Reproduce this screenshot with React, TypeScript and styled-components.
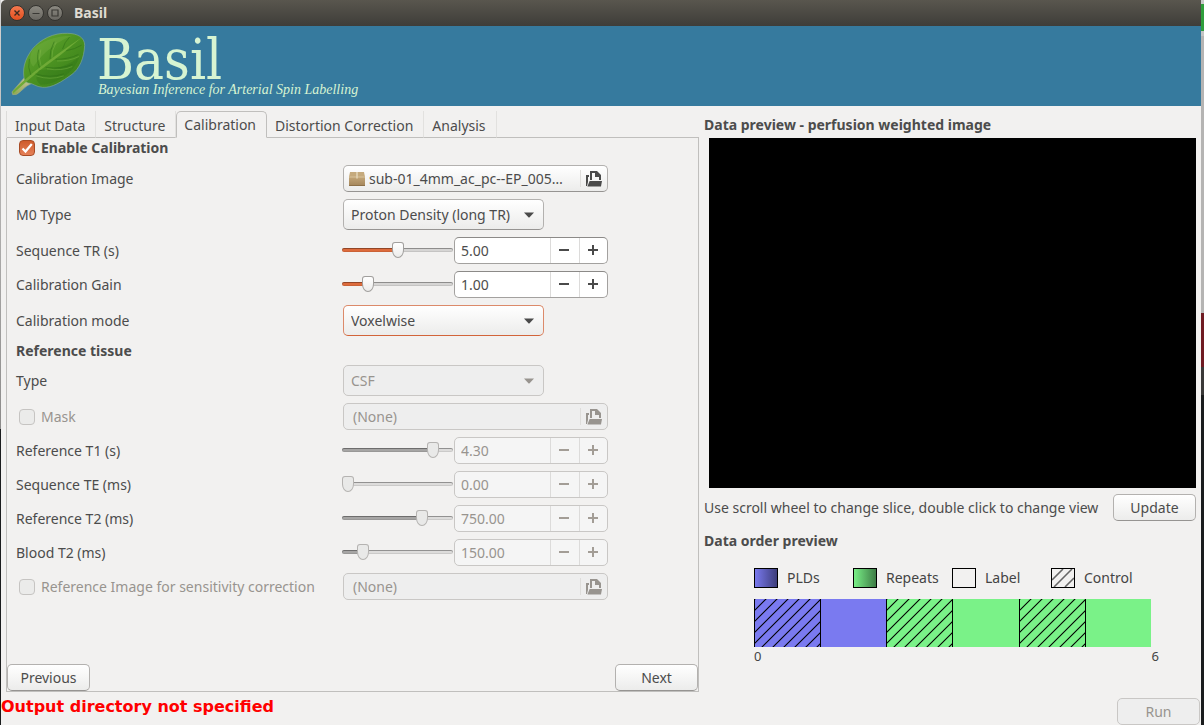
import React, { useState } from "react";
import styled, { createGlobalStyle, css } from "styled-components";

const c = {
  bg: "#f2f1f0",
  text: "#4c4c4c",
  muted: "#98948f",
  line: "#c0bfbd",
  accent: "#dd6b3c",
};

const GlobalStyle = createGlobalStyle`
  * { box-sizing: border-box; }
  body {
    margin: 0;
    font-family: "Noto Sans", "Open Sans", sans-serif;
    font-size: 14px;
    line-height: 20px;
    color: ${c.text};
    background: #1d1f1f;
  }
  button, input, select { font: inherit; color: inherit; margin: 0; }
`;

const Desktop = styled.div`
  min-height: 100vh;
  display: flex;
  padding: 0 3px 0 1px;
  background:
    linear-gradient(#c9c9c9 0 4px, #2f9e3c 4px 31px, #c4c4c4 31px 36px, #b5b4b3 36px 313px, #6f1a22 313px 367px, #3a3938 367px 395px, #1a1c1d 395px) right / 3px 100% no-repeat,
    linear-gradient(#d5d4d3, #8c8b8a 429px, #1a1c1d 429px) left / 1px 100% no-repeat;
`;

const Window = styled.div`
  flex: 1;
  min-width: 0;
  display: flex;
  flex-direction: column;
  background: ${c.bg};
`;

const TitleBar = styled.header`
  height: 26px;
  display: flex;
  align-items: center;
  gap: 3px;
  padding: 0 8px;
  border-top-left-radius: 5px;
  background: linear-gradient(#59564e, #3e3d39);
`;

const WindowButton = styled.button<{ $close?: boolean }>`
  width: 16px;
  height: 16px;
  padding: 0;
  display: grid;
  place-items: center;
  border: 1px solid #34332f;
  border-radius: 50%;
  background: ${(p) => (p.$close ? "linear-gradient(#f6794f, #e2501f)" : "linear-gradient(#8b8981, #696761)")};
`;

const WindowTitle = styled.h1`
  margin: 0 0 0 8px;
  font-size: 14px;
  line-height: 20px;
  color: #dfdbd2;
`;

const Banner = styled.div`
  height: 80px;
  display: flex;
  background: #367a9e;
  color: #d7f4d2;
`;

const BannerText = styled.div`
  margin-left: -4px;
  padding-top: 12px;
`;

const BannerName = styled.div`
  font-family: "DejaVu Serif Condensed", "Liberation Serif", serif;
  font-size: 56px;
  line-height: 44px;
`;

const BannerTag = styled.div`
  padding-left: 1px;
  font-family: "Liberation Serif", serif;
  font-size: 14px;
  line-height: 16px;
  font-style: italic;
`;

const Body = styled.main`
  flex: 1;
  display: grid;
  grid-template-columns: minmax(0, 1fr) 492px;
  gap: 5px;
  padding: 5px 5px 0;
`;

const Notebook = styled.section`
  display: flex;
  flex-direction: column;
`;

const TabList = styled.div`
  display: flex;
  height: 27px;
  align-items: flex-end;
  border-left: 1px solid #dddcda;
`;

const Tab = styled.button<{ $active: boolean }>`
  height: 27px;
  padding: 3px 10px 0 8px;
  border: 0;
  border-right: 1px solid #e2e1df;
  border-bottom: 1px solid ${c.line};
  background: transparent;
  white-space: nowrap;
  ${(p) =>
    p.$active &&
    css`
      padding: 1px 10px 1px 7px;
      border: 1px solid ${c.line};
      border-bottom-color: ${c.bg};
      border-radius: 5px 5px 0 0;
    `}
`;

const TabFiller = styled.div`
  flex: 1;
  height: 27px;
  border-bottom: 1px solid ${c.line};
`;

const Page = styled.form`
  flex: 1;
  display: flex;
  flex-direction: column;
  justify-content: space-between;
  border: 1px solid ${c.line};
  border-top: 0;
`;

const Fields = styled.div`
  display: flex;
  flex-direction: column;
  gap: 7px;
  padding-left: 9px;
`;

const Row = styled.div`
  display: grid;
  grid-template-columns: 326px 266px;
  align-items: center;
`;

const Heading = styled.h2<{ $tall?: boolean }>`
  margin: 0;
  font-size: 14px;
  line-height: ${(p) => (p.$tall ? 28 : 15)}px;
`;

const CheckLabel = styled.label<{ $off?: boolean; $bold?: boolean }>`
  display: flex;
  align-items: center;
  gap: 6px;
  padding-left: 3px;
  white-space: nowrap;
  color: ${(p) => (p.$off ? c.muted : c.text)};
  font-weight: ${(p) => (p.$bold ? 700 : 400)};
`;

const CheckBox = styled.input`
  appearance: none;
  width: 16px;
  height: 16px;
  border: 1px solid #c6c4c2;
  border-radius: 4px;
  background: #ebebea;
  &:checked {
    border-color: #a84b25;
    background: linear-gradient(#cf5b2c, #e58159);
  }
`;

const CheckCell = styled.span`
  display: grid;
  > * { grid-area: 1 / 1; }
  > svg { pointer-events: none; }
`;

const boxed = css<{ disabled?: boolean }>`
  border: 1px solid #b3b1af;
  border-bottom-color: #969492;
  border-radius: 5px;
  background: linear-gradient(#ffffff, #ececeb);
  &:disabled {
    border-color: #c9c7c5;
    background: #eeeeee;
    color: ${c.muted};
    opacity: 1;
  }
`;

const FileButton = styled.button`
  ${boxed}
  width: 265px;
  height: 27px;
  margin-left: 1px;
  padding: 0 5px;
  display: flex;
  align-items: center;
  text-align: left;
`;

const FileName = styled.span`
  flex: 1;
  padding-left: 4px;
  white-space: nowrap;
`;

const FileDivider = styled.span`
  width: 1px;
  height: 17px;
  margin: 0 5px 0 4px;
  background: #dedddb;
`;

const SelectWrap = styled.div`
  width: 201px;
  margin-left: 1px;
  display: grid;
  align-items: center;
  > * { grid-area: 1 / 1; }
  > svg { justify-self: end; margin-right: 10px; pointer-events: none; }
`;

const Select = styled.select<{ $focus?: boolean }>`
  ${boxed}
  appearance: none;
  width: 100%;
  height: 31px;
  padding: 0 22px 0 7px;
  ${(p) => p.$focus && css`border-color: #dc8a6a; border-bottom-color: #d2643a;`}
`;

const NumberCell = styled.div`
  display: grid;
  grid-template-columns: 111px 154px;
  gap: 1px;
  align-items: start;
`;

const Slider = styled.input<{ $fill: number }>`
  appearance: none;
  width: 100%;
  height: 25px;
  background: transparent;
  &::-webkit-slider-runnable-track {
    height: 4px;
    border-radius: 2px;
    box-shadow: inset 0 1px 0 rgba(0, 0, 0, 0.28), inset 0 0 0 1px rgba(0, 0, 0, 0.08);
    background: linear-gradient(to right, ${c.accent} ${(p) => p.$fill}%, #d6d5d4 ${(p) => p.$fill}%);
  }
  &:disabled::-webkit-slider-runnable-track {
    background: linear-gradient(to right, #a6a5a4 ${(p) => p.$fill}%, #dddcdb ${(p) => p.$fill}%);
  }
  &::-webkit-slider-thumb {
    appearance: none;
    width: 12px;
    height: 16px;
    margin-top: -6px;
    border: 1px solid #a19f9d;
    border-radius: 3px 3px 6px 6px / 3px 3px 8px 8px;
    background: linear-gradient(#ffffff, #ececeb);
  }
  &:disabled::-webkit-slider-thumb {
    border-color: #b5b3b1;
    background: #e9e9e8;
  }
`;

const Spin = styled.div<{ $off?: boolean }>`
  height: 27px;
  display: grid;
  grid-template-columns: 1fr 29px 28px;
  overflow: hidden;
  border: 1px solid ${(p) => (p.$off ? "#c9c7c5" : "#a3a19f")};
  border-top-color: ${(p) => (p.$off ? "#c9c7c5" : "#8c8a88")};
  border-radius: 5px;
  background: ${(p) => (p.$off ? "#f5f5f5" : "#ffffff")};
  color: ${(p) => (p.$off ? c.muted : c.text)};
`;

const SpinInput = styled.input`
  min-width: 0;
  padding: 1px 6px 0;
  border: 0;
  background: transparent;
  outline: 0;
`;

const SpinButton = styled.button`
  display: grid;
  place-items: center;
  padding: 0 2px 1px 0;
  border: 0;
  border-left: 1px solid #dcdbda;
  background: transparent;
`;

const PageButtons = styled.div`
  display: flex;
  justify-content: space-between;
`;

const PushButton = styled.button`
  ${boxed}
  width: 83px;
  height: 27px;
  padding: 0;
`;

const Side = styled.aside`
  display: flex;
  flex-direction: column;
`;

const Viewer = styled.div`
  height: 350px;
  margin: -1px 0 6px 5px;
  background: #000000;
`;

const ViewerBar = styled.div`
  display: flex;
  align-items: center;
  justify-content: space-between;
  white-space: nowrap;
  margin-bottom: 6px;
`;

const Order = styled.div`
  padding: 13px 45px 0 50px;
  color: #444444;
`;

const Legend = styled.ul`
  display: grid;
  grid-template-columns: repeat(4, 99px);
  margin: 0 0 11px;
  padding: 0;
  list-style: none;
`;

const LegendItem = styled.li`
  display: flex;
  align-items: center;
  gap: 9px;
`;

const Cells = styled.div`
  display: grid;
  grid-template-columns: repeat(6, 1fr);
  height: 48px;
`;

const Cell = styled.div<{ $color: string }>`
  border-left: 1px solid #000000;
  background: ${(p) => p.$color};
  overflow: hidden;
`;

const Axis = styled.div`
  display: flex;
  justify-content: space-between;
  margin-right: -8px;
  font-size: 13px;
  line-height: 18px;
`;

const Status = styled.footer`
  height: 33px;
  display: flex;
  justify-content: space-between;
  align-items: flex-end;
  padding-right: 1px;
`;

const ErrorText = styled.p`
  margin: 0;
  align-self: flex-start;
  font: bold 16px/30px "DejaVu Sans", sans-serif;
  color: #ff0000;
`;

const Leaf = () => (
  <svg width="100" height="80" viewBox="3 18 300 240" aria-hidden="true">
    <defs>
      <linearGradient id="leaf" x1="0" y1="0" x2="1" y2="1">
        <stop offset="0" stopColor="#6aa936" />
        <stop offset=".45" stopColor="#4d9422" />
        <stop offset="1" stopColor="#357a18" />
      </linearGradient>
      <linearGradient id="stem" x1="0" y1="1" x2="1" y2="0">
        <stop offset="0" stopColor="#8ba64c" />
        <stop offset="1" stopColor="#cfc9a3" />
      </linearGradient>
    </defs>
    <path d="M36 216 L72 174 L104 186 Q78 196 64 212 Q50 227 38 224Z" fill="url(#stem)" stroke="#9aa98a" strokeWidth="2" />
    <path d="M74 183 C66 150 72 120 98 86 C122 58 160 38 202 40 C232 40 254 52 254 76 C252 116 238 146 216 163 C184 186 156 204 128 202 C108 201 96 188 84 189 Z" fill="url(#leaf)" stroke="#7fa790" strokeWidth="2" />
    <path d="M38 214 Q72 180 102 156 Q168 104 246 52 Q182 108 116 154 Q80 184 40 220Z" fill="#6faa36" />
    <path d="M98 90 C126 62 164 48 216 47 C180 60 132 92 100 140 C88 128 88 108 98 90Z" fill="#7db648" opacity=".3" />
    <path d="M118 150 C170 148 212 134 238 110 C224 158 168 194 122 194 C108 184 104 168 118 150Z" fill="#1f6411" opacity=".22" />
    <g fill="none" stroke="#2c6d16" strokeWidth="3" opacity=".5" strokeLinecap="round">
      <path d="M92 164 Q82 142 88 118" />
      <path d="M118 142 Q108 118 116 90" />
      <path d="M150 116 Q148 92 162 66" />
      <path d="M188 86 Q192 68 208 52" />
      <path d="M108 162 Q150 176 190 162" />
      <path d="M138 142 Q184 148 216 134" />
      <path d="M168 118 Q206 118 234 104" />
      <path d="M200 92 Q224 88 244 76" />
    </g>
    <g fill="none" stroke="#93c557" strokeWidth="2" opacity=".5" strokeLinecap="round">
      <path d="M110 168 Q150 182 190 168" />
      <path d="M142 147 Q186 154 216 140" />
      <path d="M172 123 Q208 124 236 110" />
      <path d="M123 138 Q114 116 122 90" />
      <path d="M156 112 Q154 92 168 68" />
    </g>
  </svg>
);

const Arrow = ({ off }: { off?: boolean }) => (
  <svg width="10" height="6" viewBox="0 0 10 6" aria-hidden="true">
    <path d="M0 0.5H10L5.6 5.2Q5 5.7 4.4 5.2Z" fill={off ? c.muted : "#4a4a4a"} />
  </svg>
);

const OpenIcon = ({ off }: { off?: boolean }) => (
  <svg width="16" height="16" viewBox="0 0 16 16" aria-hidden="true">
    <g fill={off ? c.muted : "#4a4a4a"}>
      <path d="M0 4H3V6H2V11L1 15H0Z" />
      <path fillRule="evenodd" d="M4 0H11L15 4V9H4ZM6 2V9H13V6H9V2Z" />
      <path d="M3.6 10H16L15 15.5H1.4Z" />
    </g>
  </svg>
);

const PackageIcon = () => (
  <svg width="16" height="16" viewBox="0 0 16 16" aria-hidden="true">
    <defs>
      <linearGradient id="carton" x1="0" y1="0" x2="0" y2="1">
        <stop offset="0" stopColor="#c6a97b" />
        <stop offset="1" stopColor="#a3855a" />
      </linearGradient>
    </defs>
    <rect y="5" width="16" height="10" rx="1" fill="url(#carton)" />
    <path d="M1 1H15L16 6H0Z" fill="#c5aa7d" />
    <path d="M0 6H16" stroke="#d8c39c" />
    <path d="M7.2 1H8.8V7.5H7.2Z" fill="#e2d3b4" />
    <path d="M0 14.5H16" stroke="#8d7048" />
  </svg>
);

const Glyph = ({ d, color }: { d: string; color: string }) => (
  <svg width="10" height="10" viewBox="0 0 10 10" aria-hidden="true">
    <path d={d} stroke={color} strokeWidth="2" fill="none" />
  </svg>
);

const Hatch = ({ id }: { id: string }) => (
  <svg width="100%" height="48" aria-hidden="true">
    <defs>
      <pattern id={id} width="11" height="11" patternUnits="userSpaceOnUse">
        <path d="M-2 13L13 -2M-2 2L2 -2M9 13L13 9" stroke="#000" strokeWidth="1.1" />
      </pattern>
    </defs>
    <rect width="100%" height="48" fill={`url(#${id})`} />
  </svg>
);

const Swatch = ({ id, from, to, hatch }: { id: string; from?: string; to?: string; hatch?: boolean }) => (
  <svg width="24" height="20" viewBox="0 0 24 20" aria-hidden="true">
    <defs>
      <linearGradient id={id}>
        <stop offset="0" stopColor={from ?? c.bg} />
        <stop offset="1" stopColor={to ?? from ?? c.bg} />
      </linearGradient>
    </defs>
    {hatch && <path d="M1 12L12 1M3 19L21 1M14 19L23 10" stroke="#666" strokeWidth="1.6" fill="none" />}
    <rect x=".5" y=".5" width="23" height="19" fill={hatch ? "none" : `url(#${id})`} stroke="#000" />
  </svg>
);

function FileRow({ label, file, disabled, check }: { label: string; file?: string; disabled?: boolean; check?: boolean }) {
  return (
    <Row>
      {check ? (
        <CheckLabel $off={disabled}>
          <CheckBox type="checkbox" disabled={disabled} />
          {label}
        </CheckLabel>
      ) : (
        <span>{label}</span>
      )}
      <FileButton type="button" disabled={disabled} aria-label={label}>
        {file && <PackageIcon />}
        <FileName>{file ?? "(None)"}</FileName>
        <FileDivider />
        <OpenIcon off={disabled} />
      </FileButton>
    </Row>
  );
}

function SelectRow({ id, label, options, disabled, focus }: { id: string; label: string; options: string[]; disabled?: boolean; focus?: boolean }) {
  return (
    <Row>
      <label htmlFor={id}>{label}</label>
      <SelectWrap>
        <Select id={id} disabled={disabled} $focus={focus}>
          {options.map((o) => (
            <option key={o}>{o}</option>
          ))}
        </Select>
        <Arrow off={disabled} />
      </SelectWrap>
    </Row>
  );
}

function NumberRow({ id, label, initial, max, disabled }: { id: string; label: string; initial: number; max: number; disabled?: boolean }) {
  const [value, setValue] = useState(initial);
  const set = (v: number) => setValue(Math.min(max, Math.max(0, v || 0)));
  const ink = disabled ? "#a39d96" : "#4a4a4a";
  return (
    <Row>
      <label htmlFor={id}>{label}</label>
      <NumberCell>
        <Slider
          type="range"
          aria-label={label}
          min={0}
          max={max}
          step="any"
          value={value}
          disabled={disabled}
          $fill={(value / max) * 100}
          onChange={(e) => set(Number(e.target.value))}
        />
        <Spin $off={disabled}>
          <SpinInput id={id} value={value.toFixed(2)} disabled={disabled} onChange={(e) => set(Number(e.target.value))} />
          <SpinButton type="button" aria-label="Decrease" disabled={disabled} onClick={() => set(value - 1)}>
            <Glyph d="M0 5H10" color={ink} />
          </SpinButton>
          <SpinButton type="button" aria-label="Increase" disabled={disabled} onClick={() => set(value + 1)}>
            <Glyph d="M0 5H10M5 0V10" color={ink} />
          </SpinButton>
        </Spin>
      </NumberCell>
    </Row>
  );
}

const tabs = ["Input Data", "Structure", "Calibration", "Distortion Correction", "Analysis"];

const blue = "#7a7af0";
const green = "#7af288";
const cells = [
  { color: blue, hatch: true },
  { color: blue },
  { color: green, hatch: true },
  { color: green },
  { color: green, hatch: true },
  { color: green },
];

export default function App() {
  const [tab, setTab] = useState("Calibration");
  const [enabled, setEnabled] = useState(true);
  return (
    <Desktop>
      <GlobalStyle />
      <Window>
        <TitleBar>
          <WindowButton $close aria-label="Close">
            <svg width="8" height="8" viewBox="0 0 8 8"><path d="M1.5 1.5L6.5 6.5M6.5 1.5L1.5 6.5" stroke="#3c2a20" strokeWidth="1.4" /></svg>
          </WindowButton>
          <WindowButton aria-label="Minimise">
            <svg width="8" height="8" viewBox="0 0 8 8"><path d="M.5 4.5H7.5" stroke="#3a3935" /></svg>
          </WindowButton>
          <WindowButton aria-label="Maximise">
            <svg width="8" height="8" viewBox="0 0 8 8"><path d="M1 1H7V7H1Z" fill="none" stroke="#3a3935" strokeWidth="1.2" /></svg>
          </WindowButton>
          <WindowTitle>Basil</WindowTitle>
        </TitleBar>
        <Banner>
          <Leaf />
          <BannerText>
            <BannerName>Basil</BannerName>
            <BannerTag>Bayesian Inference for Arterial Spin Labelling</BannerTag>
          </BannerText>
        </Banner>
        <Body>
          <Notebook>
            <TabList role="tablist">
              {tabs.map((t) => (
                <Tab key={t} role="tab" aria-selected={t === tab} $active={t === tab} onClick={() => setTab(t)}>
                  {t}
                </Tab>
              ))}
              <TabFiller />
            </TabList>
            <Page onSubmit={(e) => e.preventDefault()}>
              <Fields>
                <CheckLabel $bold>
                  <CheckCell>
                    <CheckBox type="checkbox" checked={enabled} onChange={(e) => setEnabled(e.target.checked)} />
                    {enabled && (
                      <svg width="16" height="16" viewBox="0 0 16 16" aria-hidden="true">
                        <path d="M3.5 8.5L6.5 11.5L12.8 4" fill="none" stroke="#fff" strokeWidth="2.2" />
                      </svg>
                    )}
                  </CheckCell>
                  Enable Calibration
                </CheckLabel>
                <FileRow label="Calibration Image" file="sub-01_4mm_ac_pc--EP_005…" />
                <SelectRow id="m0" label="M0 Type" options={["Proton Density (long TR)", "Saturation Recovery"]} />
                <NumberRow id="tr" label="Sequence TR (s)" initial={5} max={10} />
                <NumberRow id="gain" label="Calibration Gain" initial={1} max={5} />
                <SelectRow id="mode" label="Calibration mode" options={["Voxelwise", "Reference Region"]} focus />
                <Heading>Reference tissue</Heading>
                <SelectRow id="type" label="Type" options={["CSF"]} disabled />
                <FileRow label="Mask" check disabled />
                <NumberRow id="t1" label="Reference T1 (s)" initial={4.3} max={5} disabled />
                <NumberRow id="te" label="Sequence TE (ms)" initial={0} max={30} disabled />
                <NumberRow id="t2" label="Reference T2 (ms)" initial={750} max={1000} disabled />
                <NumberRow id="bt2" label="Blood T2 (ms)" initial={150} max={1000} disabled />
                <FileRow label="Reference Image for sensitivity correction" check disabled />
              </Fields>
              <PageButtons>
                <PushButton type="button">Previous</PushButton>
                <PushButton type="button">Next</PushButton>
              </PageButtons>
            </Page>
          </Notebook>
          <Side>
            <Heading $tall>Data preview - perfusion weighted image</Heading>
            <Viewer role="img" aria-label="Data preview" />
            <ViewerBar>
              <span>Use scroll wheel to change slice, double click to change view</span>
              <PushButton type="button">Update</PushButton>
            </ViewerBar>
            <Heading $tall>Data order preview</Heading>
            <Order>
              <Legend>
                <LegendItem><Swatch id="plds" from={blue} to="#3c3c78" />PLDs</LegendItem>
                <LegendItem><Swatch id="repeats" from={green} to="#3c7944" />Repeats</LegendItem>
                <LegendItem><Swatch id="label" />Label</LegendItem>
                <LegendItem><Swatch id="control" hatch />Control</LegendItem>
              </Legend>
              <Cells>
                {cells.map((cell, i) => (
                  <Cell key={i} $color={cell.color}>
                    {cell.hatch && <Hatch id={`hatch-${i}`} />}
                  </Cell>
                ))}
              </Cells>
              <Axis>
                <span>0</span>
                <span>6</span>
              </Axis>
            </Order>
          </Side>
        </Body>
        <Status>
          <ErrorText role="alert">Output directory not specified</ErrorText>
          <PushButton type="button" disabled>Run</PushButton>
        </Status>
      </Window>
    </Desktop>
  );
}
